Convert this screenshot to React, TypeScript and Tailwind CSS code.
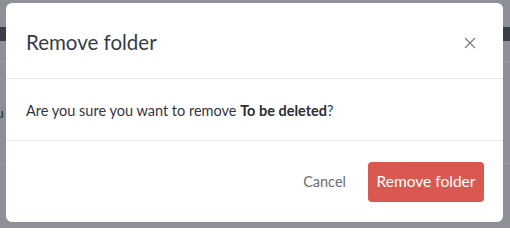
export default function App() {
  return (
    <div
      className="relative w-[510px] h-[228px] overflow-hidden bg-[#8d9096]"
      style={{ fontFamily: 'Lato, "Noto Sans", sans-serif' }}
    >
      {/* Page behind the overlay */}
      <div className="flex flex-col">
        <div className="h-[27px]" />
        <div className="h-[14px] bg-[#3b3f4b]" />
        <div className="h-[20px]" />
        <div className="h-px bg-[#9a9da2]" />
        <div className="h-[101px] flex items-center">
          <span className="text-sm text-[#2a2d35] -ml-[4px]">u</span>
        </div>
        <div className="h-px bg-[#9a9da2]" />
      </div>

      {/* Dialog */}
      <div className="absolute left-[6px] top-[3px] w-[497px] h-[219px] bg-white rounded-md flex flex-col">
        <div className="h-[76px] flex items-center justify-between pl-5 pr-[27px] border-b border-[#e6e6e6]">
          <h2 className="text-[20.5px] text-[#363b4a] pt-[4px]">Remove folder</h2>
          <button className="text-[#7d7d7d] pt-[4px]">
            <svg width="12" height="12" viewBox="0 0 12 12" fill="none" stroke="currentColor" strokeWidth="1.3">
              <path d="M1 1l10 10M11 1L1 11" />
            </svg>
          </button>
        </div>
        <div className="h-[62px] flex items-center px-5 pt-[3px] border-b border-[#e6e6e6]">
          <p className="text-[14.5px] text-[#333642]">
            Are you sure you want to remove <strong className="font-bold text-[#2b2e38]">To be deleted</strong>?
          </p>
        </div>
        <div className="flex-1 flex items-center justify-end gap-[22px] pr-[19px]">
          <button className="text-[14.5px] text-[#6b6e76]">Cancel</button>
          <button className="w-[116px] h-10 rounded bg-[#d9584f] text-white text-[15.5px]">Remove folder</button>
        </div>
      </div>
    </div>
  );
}
